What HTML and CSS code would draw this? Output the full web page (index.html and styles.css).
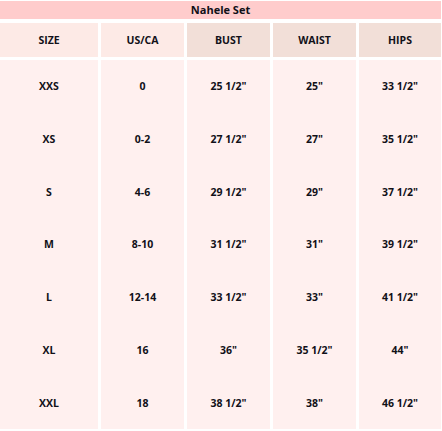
FILE: index.html
```html
<!DOCTYPE html>
<html>
<head>
<meta charset="utf-8">
<link rel="stylesheet" href="styles.css">
</head>
<body>
<div class="chart">
  <div class="title">Nahele Set</div>
  <div class="grid header">
    <div class="cell head">SIZE</div>
    <div class="cell head">US/CA</div>
    <div class="cell head dark">BUST</div>
    <div class="cell head dark">WAIST</div>
    <div class="cell head dark">HIPS</div>
  </div>
  <div class="grid body">
    <div class="cell">XXS</div><div class="cell">0</div><div class="cell">25 1/2"</div><div class="cell">25"</div><div class="cell">33 1/2"</div>
    <div class="cell">XS</div><div class="cell">0-2</div><div class="cell">27 1/2"</div><div class="cell">27"</div><div class="cell">35 1/2"</div>
    <div class="cell">S</div><div class="cell">4-6</div><div class="cell">29 1/2"</div><div class="cell">29"</div><div class="cell">37 1/2"</div>
    <div class="cell">M</div><div class="cell">8-10</div><div class="cell">31 1/2"</div><div class="cell">31"</div><div class="cell">39 1/2"</div>
    <div class="cell">L</div><div class="cell">12-14</div><div class="cell">33 1/2"</div><div class="cell">33"</div><div class="cell">41 1/2"</div>
    <div class="cell">XL</div><div class="cell">16</div><div class="cell">36"</div><div class="cell">35 1/2"</div><div class="cell">44"</div>
    <div class="cell">XXL</div><div class="cell">18</div><div class="cell">38 1/2"</div><div class="cell">38"</div><div class="cell">46 1/2"</div>
  </div>
</div>
</body>
</html>
```
FILE: styles.css
```css
html, body {
  margin: 0;
  padding: 0;
  background: #ffffff;
}
.chart {
  width: 441px;
  padding-top: 1px;
  font-family: "Open Sans", "Liberation Sans", sans-serif;
  font-weight: 700;
  font-size: 10.5px;
  color: #111118;
}
.title {
  height: 18px;
  line-height: 18px;
  background: #ffcccc;
  text-align: center;
  font-size: 11px;
}
.grid {
  display: grid;
  grid-template-columns: 98px 83px 83px 83px 82px;
  column-gap: 3px;
}
.header {
  margin-top: 4px;
  height: 34px;
}
.body {
  margin-top: 3px;
  grid-template-rows: repeat(7, 1fr);
  height: 369px;
}
.cell {
  background: #fff0ef;
  display: flex;
  align-items: center;
  justify-content: center;
}
.head {
  background: #fdeae6;
}
.head.dark {
  background: #f2dfd8;
}
```
